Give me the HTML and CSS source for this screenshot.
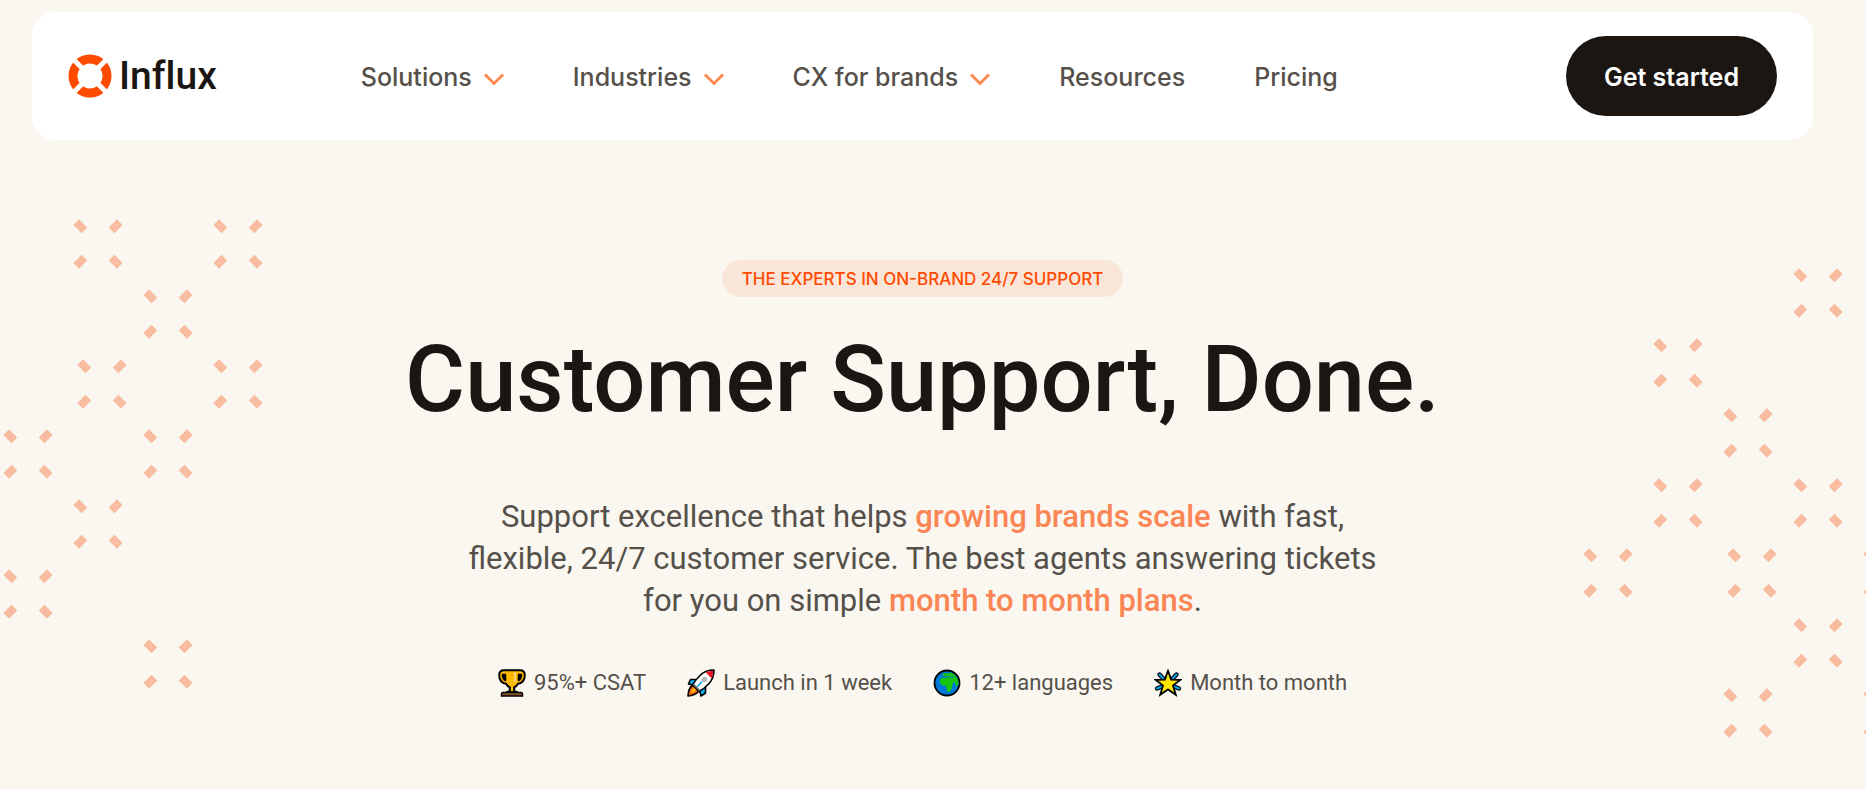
FILE: index.html
```
<!DOCTYPE html>
<html lang="en">
<head>
    <meta charset="UTF-8">
    <meta name="viewport" content="width=device-width, initial-scale=1.0">
    <title>Influx - Customer Support, Done.</title>
    <link rel="stylesheet" href="styles.css">
</head>
<body>

    <header class="navbar">
        <a class="logo" href="#">
            <svg class="logo-mark" viewBox="0 0 44 44" aria-hidden="true">
                <circle cx="22" cy="22" r="17" fill="none" stroke="#ff4b00" stroke-width="9"/>
                <path d="M4 4 L40 40 M40 4 L4 40" stroke="#fff" stroke-width="5"/>
            </svg>
            <span>Influx</span>
        </a>
        <nav class="menu">
            <button class="menu-item" type="button">Solutions
                <svg class="chevron" viewBox="0 0 20 13" aria-hidden="true"><path d="M1 1.5 L10 10.5 L19 1.5"/></svg>
            </button>
            <button class="menu-item" type="button">Industries
                <svg class="chevron" viewBox="0 0 20 13" aria-hidden="true"><path d="M1 1.5 L10 10.5 L19 1.5"/></svg>
            </button>
            <button class="menu-item" type="button">CX for brands
                <svg class="chevron" viewBox="0 0 20 13" aria-hidden="true"><path d="M1 1.5 L10 10.5 L19 1.5"/></svg>
            </button>
            <a class="menu-item" href="#">Resources</a>
            <a class="menu-item" href="#">Pricing</a>
        </nav>
        <a class="cta" href="#">Get started</a>
    </header>

    <main class="hero">
        <svg class="pattern pattern-left" viewBox="0 0 264 480" aria-hidden="true">
            <defs>
                <path id="spark" d="M-21.8 -21.8 L-13.6 -13.6 M21.8 -21.8 L13.6 -13.6 M-21.8 21.8 L-13.6 13.6 M21.8 21.8 L13.6 13.6"/>
            </defs>
            <use href="#spark" x="98" y="26"/>
            <use href="#spark" x="238" y="26"/>
            <use href="#spark" x="168" y="96"/>
            <use href="#spark" x="102" y="166"/>
            <use href="#spark" x="238" y="166"/>
            <use href="#spark" x="28" y="236"/>
            <use href="#spark" x="168" y="236"/>
            <use href="#spark" x="98" y="306"/>
            <use href="#spark" x="28" y="376"/>
            <use href="#spark" x="168" y="446"/>
        </svg>

        <section class="intro">
            <p class="badge">THE EXPERTS IN ON-BRAND 24/7 SUPPORT</p>
            <h1>Customer Support, Done.</h1>
            <p class="lead">
                Support excellence that helps <strong>growing brands scale</strong> with fast,<br>
                flexible, 24/7 customer service. The best agents answering tickets<br>
                for you on simple <strong>month to month plans</strong>.
            </p>
            <ul class="features">
                <li>
                    <svg class="icon" viewBox="0 0 28 28" aria-hidden="true">
                        <path d="M6 1.2 H22 Q26.8 1.2 26.8 6 Q26.8 13.5 20 14.8 Q18.5 17.5 16.2 18.2 V21.5 Q16.5 22.7 19 23 H9 Q11.5 22.7 11.8 21.5 V18.2 Q9.5 17.5 8 14.8 Q1.2 13.5 1.2 6 Q1.2 1.2 6 1.2 Z" fill="#ffb900" stroke="#000" stroke-width="2" stroke-linejoin="round"/>
                        <path d="M4.5 5.5 H7.5 V11.5 Q4.5 10.5 4.5 5.5 Z M23.5 5.5 H20.5 V11.5 Q23.5 10.5 23.5 5.5 Z" stroke="#000" stroke-width="1.5" stroke-linejoin="round"/>
                        <path d="M17 4 V12" stroke="#ffd67a" stroke-width="2" stroke-linecap="round"/>
                        <path d="M3.5 27 V25 Q3.5 23.5 5 23.5 H23 Q24.5 23.5 24.5 25 V27 Z" fill="#8e562e" stroke="#000" stroke-width="1.5"/>
                    </svg>
                    95%+ CSAT
                </li>
                <li>
                    <svg class="icon" viewBox="0 0 28 28" aria-hidden="true">
                        <path d="M8.5 10.5 H3.5 L1.5 15 L7 16 L12.5 21 L14 27 L18.5 24 V18.5 Z" fill="#00bcf2" stroke="#000" stroke-width="1.6" stroke-linejoin="round"/>
                        <path d="M5.5 16 Q1.5 19 1 27 Q8 26.5 12 22 Z" fill="#f7630c" stroke="#000" stroke-width="1.6" stroke-linejoin="round"/>
                        <path d="M4 24 Q4.5 20.5 7 18.5 L9 21 Q7.5 23.5 4 24 Z" fill="#ffb900"/>
                        <path d="M27 1 Q18 1 13 6.5 Q8 11.5 5.5 16 L12 22.5 Q17.5 19.5 21.5 15 Q27 9.5 27 1 Z" fill="#fff" stroke="#000" stroke-width="1.6" stroke-linejoin="round"/>
                        <path d="M26.3 1.7 Q22 1.8 18.7 3.3 L24.5 9.2 Q26.2 6 26.3 1.7 Z" fill="#e81224"/>
                        <circle cx="17.5" cy="10.5" r="2.8" fill="#b8b8b8"/>
                        <path d="M10 18 L15 12.5" stroke="#00a5df" stroke-width="1.4"/>
                        <path d="M6.5 15.5 L12.5 21.5" stroke="#666" stroke-width="1.6"/>
                    </svg>
                    Launch in 1 week
                </li>
                <li>
                    <svg class="icon" viewBox="0 0 28 28" aria-hidden="true">
                        <circle cx="14" cy="14" r="12.5" fill="#0078d7" stroke="#000" stroke-width="1.8"/>
                        <path d="M9 5.5 L12 4 L15 4.5 L18 3.5 L22 6 L25 10.5 L25.5 15 L23.5 18 L21.5 12.5 L19.5 15 L19 19 L16.5 23 H14.5 L13.5 19 L12.5 16.5 H9.5 L7 14 V10.5 L10 8.5 L13.5 9.5 L14 7.5 L11 7.2 Z" fill="#16c60c"/>
                        <path d="M14 7.3 L18 8.5 L21 7.8" fill="none" stroke="#0078d7" stroke-width="1"/>
                    </svg>
                    12+ languages
                </li>
                <li>
                    <svg class="icon" viewBox="0 0 28 28" aria-hidden="true">
                        <path d="M5.5 5.5 L10 10.5 M22.5 5.5 L18 10.5 M3 19.5 L9 17 M25 19.5 L19 17" stroke="#000" stroke-width="4.4" stroke-linecap="round"/>
                        <path d="M5.5 5.5 L10 10.5 M22.5 5.5 L18 10.5 M3 19.5 L9 17 M25 19.5 L19 17" stroke="#00a5e8" stroke-width="2" stroke-linecap="round"/>
                        <path d="M14 1.8 L17.1 10.6 L26.5 10.8 L19 16.5 L21.8 25.8 L14 20.4 L6.2 25.8 L9 16.5 L1.5 10.8 L10.9 10.6 Z" fill="#ffe600" stroke="#000" stroke-width="1.8"/>
                    </svg>
                    Month to month
                </li>
            </ul>
        </section>

        <svg class="pattern pattern-right" viewBox="1581 0 285 480" aria-hidden="true">
            <use href="#spark" x="1818" y="26"/>
            <use href="#spark" x="1678" y="96"/>
            <use href="#spark" x="1748" y="166"/>
            <use href="#spark" x="1678" y="236"/>
            <use href="#spark" x="1818" y="236"/>
            <use href="#spark" x="1608" y="306"/>
            <use href="#spark" x="1752" y="306"/>
            <use href="#spark" x="1888" y="306"/>
            <use href="#spark" x="1818" y="376"/>
            <use href="#spark" x="1748" y="446"/>
            <use href="#spark" x="1888" y="446"/>
        </svg>
    </main>

</body>
</html>
```
FILE: styles.css
```
* {
    box-sizing: border-box;
}
body {
    margin: 0;
    background-color: #faf7f0;
    color: #55504a;
    font-family: Inter, "Liberation Sans", sans-serif;
}
a {
    color: inherit;
    text-decoration: none;
}

/* Navigation */
.navbar {
    display: flex;
    align-items: center;
    margin: 12px 53px 0 32px;
    padding: 24px 36px;
    background: white;
    border-radius: 24px;
}
.logo {
    display: flex;
    align-items: center;
    gap: 7px;
    color: #1c1613;
    font-family: Roboto, "Liberation Sans", sans-serif;
    font-size: 39px;
    font-weight: 500;
    line-height: 44px;
    font-variant-ligatures: none;
}
.logo-mark {
    width: 44px;
    height: 44px;
}
.menu {
    display: flex;
    flex: 1;
    gap: 69px;
    margin-left: 144px;
}
.menu-item {
    display: flex;
    align-items: center;
    gap: 12px;
    padding: 2px 0 0;
    border: none;
    background: none;
    color: #55504a;
    font-family: inherit;
    font-size: 25px;
    font-weight: 500;
    line-height: 32px;
    white-space: nowrap;
    cursor: pointer;
}
.chevron {
    width: 20px;
    height: 13px;
    margin-top: 4px;
    fill: none;
    stroke: #ff8a4f;
    stroke-width: 3;
}
.cta {
    padding: 25px 38px 23px;
    border-radius: 40px;
    background: #1c1613;
    color: white;
    font-size: 25px;
    font-weight: 600;
    line-height: 32px;
    white-space: nowrap;
}

/* Hero */
.hero {
    display: grid;
    grid-template-columns: 264px 1fr 285px;
    align-items: start;
}
.pattern {
    width: 100%;
    stroke: #f8bca0;
    stroke-width: 8;
}
.pattern-left {
    margin-top: 78px;
}
.pattern-right {
    margin-top: 127px;
}
.intro {
    display: flex;
    flex-direction: column;
    align-items: center;
    padding-top: 120px;
    text-align: center;
}
.badge {
    margin: 0;
    padding: 7px 20px 5px;
    border-radius: 20px;
    background: #fae6d8;
    color: #ff4b00;
    font-size: 17px;
    font-weight: 500;
    line-height: 25px;
}
h1 {
    margin: 31px 0 0;
    color: #1c1613;
    font-family: Roboto, "Liberation Sans", sans-serif;
    font-size: 92px;
    font-weight: 500;
    line-height: 104px;
    white-space: nowrap;
}
.lead {
    margin: 64px 0 0;
    font-family: Roboto, "Liberation Sans", sans-serif;
    font-size: 31px;
    line-height: 42px;
    white-space: nowrap;
}
.lead strong {
    color: #fa8555;
    font-weight: 500;
}
.features {
    display: flex;
    gap: 41px;
    margin: 45px 0 0;
    padding: 0;
    list-style: none;
    font-family: Roboto, "Liberation Sans", sans-serif;
    font-size: 22px;
    line-height: 32px;
    white-space: nowrap;
}
.features li {
    display: flex;
    align-items: center;
    gap: 8px;
}
.icon {
    width: 28px;
    height: 28px;
}
```
